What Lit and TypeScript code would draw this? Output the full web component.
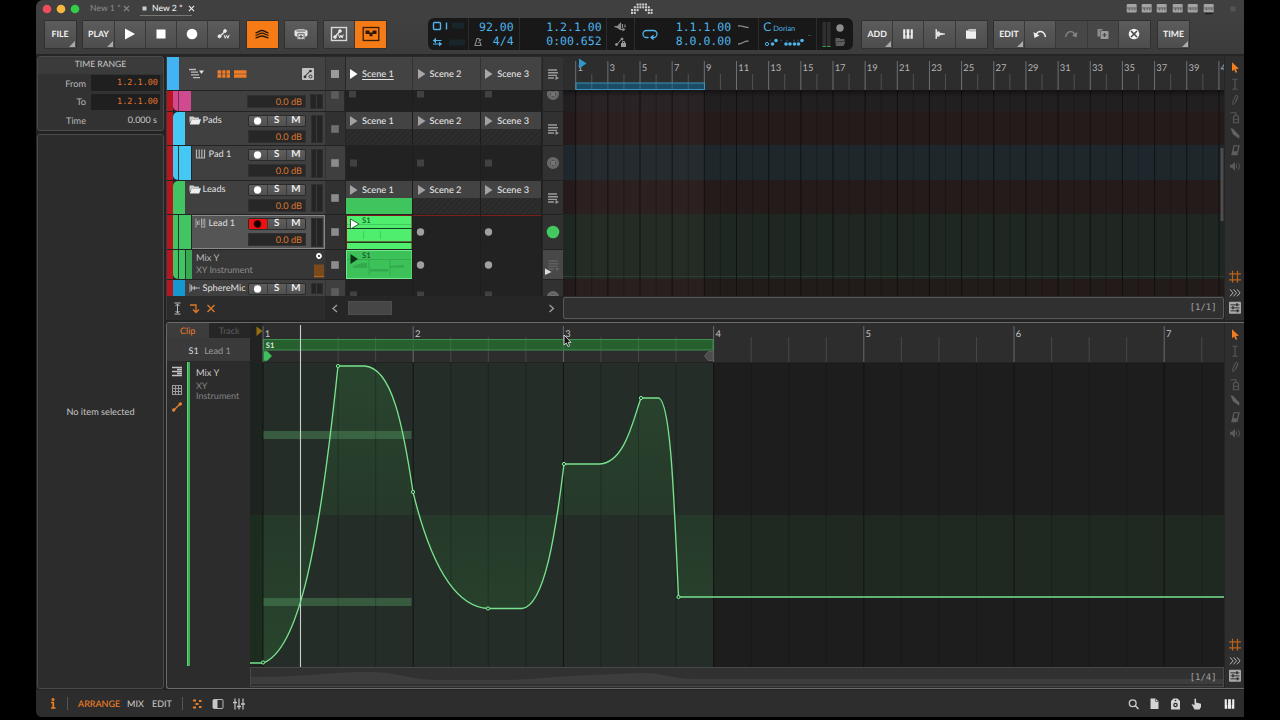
import { LitElement, html, svg, css } from "lit";
import { customElement, state } from "lit/decorators.js";

type Track = {
  name: string; h: number; kind: string; color: string; depth: number;
  icon?: string; cells: string; act: string;
};

const TRACKS: Track[] = [
  { name: "", h: 21, kind: "cut", color: "#cf4a8e", depth: 0, cells: "stop", act: "ring" },
  { name: "Pads", h: 34, kind: "group", color: "#44c8f5", depth: 0, icon: "folder", cells: "scene", act: "list" },
  { name: "Pad 1", h: 35, kind: "track", color: "#44c8f5", depth: 1, icon: "keys", cells: "stop", act: "ring" },
  { name: "Leads", h: 34, kind: "group", color: "#43c463", depth: 0, icon: "folder", cells: "scene", act: "list" },
  { name: "Lead 1", h: 35, kind: "armed", color: "#43c463", depth: 1, icon: "hybrid", cells: "rec", act: "live" },
  { name: "Mix Y", h: 30, kind: "lane", color: "#43c463", depth: 2, cells: "rec", act: "lane" },
  { name: "SphereMic", h: 17, kind: "last", color: "#1697cf", depth: 0, icon: "wave", cells: "stop", act: "ring" },
];

/* Glyphs share a box centred on 0,0 */
const G: Record<string, any> = {
  play: svg`<path d="M-5-5.5L5 0L-5 5.5z" fill="#fff"/>`,
  stop: svg`<rect x="-4.5" y="-4.5" width="9" height="9" fill="#fff"/>`,
  rec: svg`<circle r="5.3" fill="#fff"/>`,
  autoW: svg`<g stroke="#e8e8e8" fill="#e8e8e8"><path d="M-4.5 2.500L1.500-3" stroke-width="1.300"/><circle cx="-4.500" cy="2.300" r="1.500"/><circle cx="1" cy="-3" r="1.400"/><path d="M0 0.800l1.300 3.500l1.300-3l1.300 3l1.300-3.500" fill="none" stroke-width="1"/></g>`,
  layers: svg`<g fill="none" stroke="#2a1704" stroke-width="1.300"><path d="M-6.500-1.200C-3.500-1.200-3-3.500 0-3.500S3.500-1.200 6.500-1.200"/><path d="M-6.500 1.300C-3.500 1.300-3-.8 0-.8S3.500 1.300 6.500 1.300"/><path d="M-6.500 3.800C-3.500 3.800-3 2 0 2S3.500 3.800 6.500 3.800"/></g>`,
  drum: svg`<path d="M-6.500-3C-6.500-5.500 6.500-5.500 6.500-3V1C6.500 2 5 2.500 4 2.800V5.500H-4V2.800C-5 2.500-6.500 2-6.500 1z" fill="#e2e2e2"/><ellipse cy="-3" rx="5" ry="1.200" fill="#9a9a9a"/><rect x="-3.500" y="-.6" width="7" height="6.600" fill="#444"/><rect x="-2.700" y=".2" width="5.400" height="5" fill="#e2e2e2"/><path d="M0 .8v3.800M-1.900 2.700h3.800" stroke="#444"/>`,
  boxAuto: svg`<rect x="-7.500" y="-6.500" width="15" height="13" fill="none" stroke="#d8d8d8" stroke-width="1.400"/><g stroke="#e8e8e8" fill="#e8e8e8"><path d="M-4 3L1-3" stroke-width="1.300"/><circle cx="-4" cy="3" r="1.300"/><circle cx="1" cy="-3" r="1.300"/><path d="M-.5 0.500l1.200 3.500l1.200-3l1.200 3l1.200-3.500" fill="none"/></g>`,
  boxClip: svg`<rect x="-7.800" y="-6.500" width="15.600" height="13" fill="none" stroke="#3a1d05" stroke-width="1.300"/><path d="M-5.500-3.500h4v3.500h-4zM-1.500-1.500h3v3.700h-3zM1.500-3.500h4v3.500h-4z" fill="#2c1603"/>`,
  piano: svg`<path d="M-4.800-4.800H-2.700V1H-1.400V-4.800H1.400V1H2.700V-4.800H4.800V4.800H-4.800z" fill="#eee"/><path d="M-2-1V5M2-1V5" stroke="#4b4b4b" stroke-width=".9"/>`,
  wave: svg`<path d="M-4.500-5L-3.300-5L-2.500-2L-1-3L0-1.300L5-.5V.5L0 1.300L-1 3L-2.500 2L-3.300 5H-4.500z" fill="#e2e2e2"/>`,
  folder: svg`<path d="M-5-3.500H-2.500V-4.800H5V4.800H-5z" fill="#eee"/><path d="M-2-3.200H5" stroke="#777" stroke-width=".7"/>`,
  undo: svg`<path d="M-4 1.500C-2.500-4 4-4 5.500 3" fill="none" stroke="#eee" stroke-width="1.500"/><path d="M-6.500-2L-5.500 4L-.5 1.500z" fill="#eee"/>`,
  redo: svg`<path d="M4 1.500C2.500-4-4-4-5.500 3" fill="none" stroke="#858585" stroke-width="1.300"/><path d="M6.300-2L5.500 3.500L1 1.500z" fill="#858585"/>`,
  dup: svg`<path d="M-5.500-5h5v1.500h-2.500v6h-2.500z" fill="#8b8b8b"/><rect x="-2.500" y="-3" width="8" height="8" rx="1" fill="#9a9a9a"/><path d="M1.500-1v4M-.5 1h4" stroke="#444" stroke-width="1.200"/>`,
  del: svg`<circle r="5.300" fill="#f2f2f2"/><path d="M-3-3L3 3M3-3L-3 3" stroke="#444" stroke-width="1.500"/>`,
};

const keysGlyph = svg`<path d="M-4-4.500v9M-1.300-4.500v9M1.300-4.500v9M4-4.500v9M-4.500 4h9" stroke="#b5b5b5" stroke-width="1.200" fill="none"/>`;

const TOOLS = [
  svg`<path d="M-3-5L4 1.500L.8 1.700L2.300 5L.6 5.500L-.8 2.300L-3 4z" fill="#ef7d22"/>`,
  svg`<path d="M-2.500-5h2l.5.500.5-.5h2M-2.500 5h2l.5-.5.5.5h2M0-5V5" stroke="#5c5c5c" fill="none"/>`,
  svg`<path d="M-2 4.500L-2.200 1.500L1-5L3-4L0 2.500z" fill="none" stroke="#575757"/><path d="M.5 2L3-3" stroke="#575757"/>`,
  svg`<path d="M-1.500 5.500V-.5L0-2H2L3.500-.5V5.500z" fill="none" stroke="#575757" stroke-width="1.200"/><path d="M1-5v3M-4.500-4.500H1M-1 2h4" stroke="#575757"/>`,
  svg`<path d="M-4.500-5L-2-4.500L4.500 2.500L4 5.500L-2 1z" fill="#626262"/>`,
  svg`<path d="M-3 4.500L-1 -4.500H4L2 4.500z" fill="none" stroke="#606060" stroke-width="1.200"/><path d="M-2 1h4l-.7 3.500h-4z" fill="#606060"/>`,
  svg`<path d="M-5-1.500h2L0-4.500V4.500L-3 1.500h-2z" fill="#5a5a5a"/><path d="M1.500-2v4M3-3.500C5-1.500 5 1.500 3 3.500" stroke="#5a5a5a" fill="none"/>`,
];
const TOOLS2 = [
  svg`<path d="M-2.500-6V6M2.500-6V6M-6-3H6M-6 3H6" stroke="#b8621f" stroke-width="1.200"/>`,
  svg`<path d="M-5-3.500L-2 0L-5 3.500M-1.500-3.500L1.500 0L-1.500 3.500M2-3.500L5 0L2 3.500" stroke="#b5b5b5" fill="none"/>`,
  svg`<rect x="-6" y="-6" width="12" height="12" rx="1" fill="#a9a9a9"/><path d="M-4.500-3h9M-4.500 0h9M-4.500 3h9" stroke="#333"/><path d="M2-4.500v3M-2-1.500v3M2.500 1.500v3" stroke="#333" stroke-width="1.600"/>`,
];

const ic = (g: any, w = 16, h = 16) =>
  html`<svg width=${w} height=${h} viewBox="${-w / 2} ${-h / 2} ${w} ${h}">${g}</svg>`;
const range = (n: number) => Array.from({ length: n }, (_, i) => i);
const stripWidth = (t: Track) => (t.kind === "cut" ? 24.3 : t.depth === 0 ? 18 : t.depth === 1 ? 24.5 : 25);
const closeX = () => ic(svg`<path d="M-2.600-2.600L2.600 2.600M2.600-2.600L-2.600 2.600" stroke="currentColor" stroke-width="1.100"/>`, 7, 7);

@customElement("app-root")
export class AppRoot extends LitElement {
  @state() scenes = ["Scene 1", "Scene 2", "Scene 3"];

  static styles = css`
    :host { display: block; width: 1280px; height: 720px; background: #000; overflow: hidden;
      font-family: Lato, "Open Sans", sans-serif; font-size: 9px; color: #ccc; line-height: 1;
      text-rendering: geometricPrecision; }
    * { box-sizing: border-box; }
    svg { display: block; flex: none; }
    .mono { font-family: "DejaVu Sans Mono", "Liberation Mono", monospace; }
    .win { width: 1208px; height: 717px; margin: 0 36px; background: #232323; border-radius: 7px 0 0 6px;
      display: flex; flex-direction: column; overflow: hidden; position: relative; }
    .title { height: 17px; background: #404040; display: flex; align-items: center; flex: none; }
    .tab { font-size: 8.600px; white-space: nowrap; color: #8b8b8b; display: flex; align-items: center; height: 14px; }
    .tab.on { color: #f0f0f0; border-bottom: 1px solid #777; font-weight: 500; }
    .bar { height: 39px; background: linear-gradient(#404040, #3c3c3c); display: flex; flex: none;
      border-bottom: 2px solid #252525; padding: 3.500px 0 0 8.500px; }
    .bg { display: flex; flex: none; height: 27.500px; box-shadow: 0 0 0 1px #303030; border-radius: 1px; }
    .b { width: 31.200px; height: 27.500px; display: flex; align-items: center; justify-content: center;
      background: linear-gradient(#5c5c5c, #4d4d4d); border-right: 1px solid #393939; position: relative;
      color: #f2f2f2; font-size: 8.700px; font-weight: 700; }
    .b:last-child { border-right: 0; }
    .b.o { background: #f47b16; }
    .b.off { background: #474747; }
    .b.m::after { content: ""; position: absolute; right: 1px; bottom: 1px; border: 3px solid;
      border-color: transparent #aaa #aaa transparent; }
    .lcd { width: 425px; height: 32px; margin-top: -2.500px; background: #181818; border-radius: 6px; display: grid; flex: none;
      grid-template-columns: 41px 51px 87px 28px 124px 58px 36px; color: #4fb3e8; overflow: hidden; }
    .lcd > div { border-right: 1px solid #2c2c2c; display: flex; }
    .lcd > div:last-child { border: 0; }
    .two { flex-direction: column; justify-content: space-between; align-items: flex-end; padding: 3px 5px 2px 0; }
    .two span { font-size: 11.500px; line-height: 13px; height: 13px; }
    .two .r { display: flex; align-items: center; }
    .body { display: grid; grid-template-columns: 129px 1079px; height: 634px; flex: none; }
    .left { padding: 0 1px 1px 1px; display: flex; flex-direction: column; gap: 3px; }
    .panel { border: 1px solid #4a4a4a; border-radius: 3px; background: #2c2c2c; }
    .tr { height: 75px; background: #323232; overflow: hidden; }
    .tr h1 { margin: 0; height: 17px; font-size: 8.600px; font-weight: 400; text-align: center; color: #c6c6c6;
      line-height: 14.500px; background: #3b3b3b; }
    .tr .f { display: flex; align-items: center; height: 18.600px; }
    .tr .f label { width: 48px; text-align: right; color: #b8b8b8; font-size: 9.200px; }
    .tr .f b { margin-left: 5px; width: 69px; height: 16px; line-height: 16.500px; background: #1f1f1f; text-align: right;
      font-weight: 400; padding-right: 2px; color: #e0762c; font-size: 8.500px; }
    .tr .f b.n { background: none; color: #c6c6c6; font-size: 9px; padding-right: 3px; }
    .empty { flex: 1; display: flex; align-items: center; justify-content: center; color: #c4c4c4; font-size: 9.200px; }
    .main { display: flex; flex-direction: column; gap: 2px; padding-left: 1px; }
    .arr { height: 264px; display: grid; grid-template-columns: 396px 661px 20px; background: #2a2a2a;
      border-left: 1px solid #3c3c3c; }
    .hd { height: 34px; display: flex; background: #434343; border-top: 1px solid #2a2a2a; }
    .hd .blue { width: 11.500px; background: #42b4f4; }
    .hd .ctl { width: 146.500px; display: flex; align-items: center; }
    .st { width: 20.500px; display: flex; align-items: center; justify-content: center; background: #3d3d3d;
      border-right: 1px solid #262626; border-left: 1px solid #333; flex: none; }
    .sc { display: grid; grid-template-columns: 67.600px 67.600px 61.800px; flex: none; }
    .s { display: flex; align-items: center; gap: 4px; color: #e2e2e2; font-size: 9.200px; font-weight: 500; border-right: 1px solid #333;
      background: #434343; padding-left: 3.500px; white-space: nowrap; overflow: hidden; }
    .s u { text-underline-offset: 2px; }
    .row { display: flex; border-top: 1px solid #232323; background: #3b3b3b; overflow: hidden; }
    .strips { display: flex; background: #262626; flex: none; height: 100%; }
    .strips i { height: 100%; display: block; flex: none; }
    .inf { display: flex; background: #3f3f3f; overflow: hidden; flex: none; }
    .nm { flex: 1; display: flex; gap: 4px; color: #dadada; font-size: 9.200px; font-weight: 500; height: 16px; align-items: center; white-space: nowrap; }
    .mix { width: 58.500px; flex: none; }
    .rsm { display: flex; height: 12px; margin-top: 3px; background: linear-gradient(#5f5f5f, #505050); border: 1px solid #2a2a2a; border-radius: 2px; }
    .rsm span { flex: 1; display: flex; align-items: center; justify-content: center; font-weight: 700; color: #eee;
      border-right: 1px solid #3a3a3a; font-size: 9.800px; }
    .rsm span:last-child { border: 0; }
    .rsm .arm { background: #ee1111; }
    .db { height: 13px; margin-top: 2.500px; background: #272727; color: #dd752d; text-align: right;
      padding-right: 3px; font-size: 9.200px; border: 1px solid #303030; line-height: 11.500px; }
    .mt { width: 12.500px; margin: 3px 2px 2px 4.500px; background: #242424; border: 1px solid #2f2f2f; display: flex; justify-content: center; flex: none; }
    .mt::before { content: ""; width: 1px; background: #3a3a3a; }
    .cell { border-right: 1px solid #1d1d1d; background: #222; overflow: hidden; }
    .cell .s { height: 17px; border: 0; }
    .hatch { background: repeating-linear-gradient(135deg, #2d2d2d 0 2px, #292929 2px 4px); }
    .ac { flex: 1; display: flex; align-items: center; justify-content: center; background: #333; border-left: 1px solid #242424; }
    .ft { height: 24px; display: flex; align-items: center; background: #262626; }
    .ft .l { width: 158px; display: flex; align-items: center; background: #2c2c2c; height: 24px; padding-left: 2.500px; }
    .thumb { width: 44px; height: 14px; background: #464646; border: 1px solid #4e4e4e; margin-left: 5px; }
    .tl { display: flex; flex-direction: column; }
    .sb { height: 22px; margin-top: 1px; background: #303030; border: 1px solid #585858; border-radius: 2px; text-align: right;
      color: #a0a0a0; line-height: 21px; font-size: 8.900px; padding-right: 6.500px; }
    .tools { display: flex; flex-direction: column; background: #2e2e2e; border-left: 1px solid #242424; align-items: center; }
    .tools .sp { flex: 1; }
    .ed { height: 367px; display: grid; grid-template-columns: 83px 974px 20px; background: #2c2c2c; border: 1px solid #6b6b6b;
      border-right: 0; border-radius: 3px 0 0 3px; }
    .tabs { display: flex; height: 15px; font-size: 9px; line-height: 15px; text-align: center; }
    .tabs div { width: 41.500px; background: #3c3c3c; color: #ec7b29; }
    .tabs .off { background: #262626; color: #5c5c5c; }
    .clipn { height: 24px; background: #3a3a3a; border-bottom: 1px solid #2a2a2a; line-height: 25px; padding-left: 21.500px;
      color: #dcdcdc; font-size: 9.200px; }
    .clipn em { font-style: normal; color: #999; margin-left: 3px; }
    .lane { display: flex; height: 304px; }
    .lane .v { width: 20px; display: flex; flex-direction: column; align-items: center; padding-top: 1px; gap: 1.500px; }
    .lane .g { width: 3px; background: #3fae57; border-left: 1px solid #56d673; }
    .lane .t { padding: 6px 0 0 6px; color: #cfcfcf; line-height: 10.500px; font-size: 9.300px; width: 58px; }
    .lane .t p { margin: 2px 0 0; color: #858585; line-height: 10.500px; font-size: 9px; }
    .scr { height: 20px; background: #313131; border: 1px solid #484848; position: relative; display: flex; justify-content: flex-end; }
    .scr span { position: relative; color: #a0a0a0; line-height: 20px; font-size: 8.900px; padding-right: 6.500px; }
    .scr svg { position: absolute; left: 0; top: 0; }
    .foot { height: 27px; display: flex; align-items: center; background: #2d2d2d; font-size: 9px; font-weight: 500; color: #c4c4c4; }
    .foot i { width: 1px; height: 13px; background: #555; }
    .cursor { position: absolute; left: 527px; top: 334px; }
  `;

  btn(label: string, cls = "") {
    return html`<div class="b ${cls}">${G[label] ? ic(G[label], 20, 20) : label}</div>`;
  }
  group(items: [string, string?][], gap: number) {
    return html`<div class="bg" style="margin-right:${gap}px">${items.map(([l, c]) => this.btn(l, c ?? ""))}</div>`;
  }

  trackIcon(k?: string) {
    if (k === "folder") return ic(svg`<path d="M-5.500-3.500H-1.500L-.5-2.500H4V-1H-3L-5.500 3z" fill="#ccc"/><path d="M-3.200-.8H6L4.200 4.500H-5.200z" fill="#eee"/>`, 12, 12);
    if (k === "keys") return ic(keysGlyph, 11, 12);
    if (k === "hybrid") return ic(svg`<path d="M-4.500-4.500v9M-3-2v4M-1.500-3v5M1-4.500v9M4.300-4.500v9M1 4h3.300M2.600-4v6" stroke="#aaa" fill="none"/>`, 11, 12);
    return ic(svg`<path d="M-4.500-4v8M-3-3v6M-1.500-1.500v3M0-2v4M1.500-1v2M-4.500 0h10" stroke="#aaa" fill="none"/>`, 11, 12);
  }

  strips(t: Track) {
    const c = t.color, bar = (w: number, col: string, r = "") =>
      html`<i style="width:${w}px;background:${col};border-radius:${r || "0"}"></i>`;
    const red = bar(5.5, "#b5161f"), gap = bar(0.8, "#262626"), line = bar(1, "#1f3a2c");
    if (t.kind === "cut") return html`${red}${gap}${bar(5, c, "0 0 0 5px")}${bar(1, "#7a2850")}${bar(12, c)}`;
    if (t.kind === "last") return html`${red}${gap}${bar(11.7, c)}`;
    if (t.depth === 0) return html`${red}${gap}${bar(11.7, c, "5px 0 0 0")}`;
    if (t.depth === 1) return html`${red}${gap}${bar(5.2, c, t.name === "Pad 1" ? "0 0 0 5px" : "")}${line}${bar(12, c)}`;
    return html`${red}${gap}${bar(5.2, c, "0 0 0 5px")}${line}${bar(5.5, c)}${line}${bar(6, "#38a854")}`;
  }

  info(t: Track) {
    if (t.kind === "lane") return html`<div style="width:121px;padding:2px 0 0 4px;color:#bcbcbc;font-size:9.3px;line-height:12px">
        <div>Mix Y</div><div style="color:#8e8e8e;font-size:9px">XY Instrument</div></div>
      ${ic(svg`<circle cx="0" cy="-8.500" r="2" fill="#222" stroke="#fff" stroke-width="1.800"/><rect x="-5" y="0" width="10" height="13" fill="#7a4a1c"/><path d="M-5 12h10" stroke="#b0661f"/>`, 12, 29)}`;
    const rec = t.kind === "armed"
      ? html`<span class="arm">${ic(svg`<circle r="3.900" fill="#6a0000"/><circle r="3" fill="#120000"/>`, 9, 10)}</span>`
      : html`<span>${ic(svg`<circle r="3.700" fill="#fff"/>`, 9, 10)}</span>`;
    return html`
      <div class="nm" style="padding-left:${t.depth ? 3 : 4}px;gap:${t.kind === "group" ? 1.5 : t.kind === "last" ? 2.5 : 3}px">
        ${t.name ? this.trackIcon(t.icon) : ""}${t.name}</div>
      <div class="mix">
        ${t.kind === "cut" ? html`<div style="height:1px"></div>` : html`<div class="rsm">${rec}<span>S</span><span>M</span></div>`}
        ${t.kind === "last" ? "" : html`<div class="db">0.0 dB</div>`}
      </div><div class="mt"></div>`;
  }

  tri(fill: string) {
    return ic(svg`<path d="M-3.500-5L4 0L-3.500 5z" fill=${fill}/>`, 9, 12);
  }

  clip(t: Track) {
    if (t.name === "Leads") return svg`<rect x="0" y="17" width="66.500" height="17" fill="#40c45d"/>`;
    if (t.name === "Lead 1") return svg`<rect width="66.500" height="34" fill="#7a1a18"/><rect x="1" y="1" width="64.500" height="12" fill="#50ee6e"/><rect x="1" y="14" width="64.500" height="12.500" fill="#50ee6e"/><rect x="1" y="28" width="64.500" height="6" fill="#50ee6e"/>
      <path d="M1 13.500h64.500M1 27.300h64.500" stroke="#123c1b"/><path d="M1 9.500h64.500M17.500 16v8M34.500 16v8" stroke="#37b352" stroke-width=".6"/>
      <path d="M4.500 4L13 9L4.500 14z" fill="#fff" stroke="#1d3d22" stroke-width=".8"/><text x="16" y="7.500" font-size="7.800" fill="#123c1b">S1</text>`;
    return svg`<rect x=".5" y=".5" width="65.500" height="28" fill="#3dc159" stroke="#72e88a"/><path d="M1 9.500h64M23 10v15M44 10v15" stroke="#2f9c47" stroke-width=".6"/>
      <path d="M7 16L16 13H21V18H7zM24 19h18v2.500h-18zM44 16l14-1v2.500H44z" fill="#35a94e"/><path d="M4.500 4L12 9L4.500 14z" fill="#0e3418"/><text x="16" y="7.500" font-size="7.800" fill="#123c1b">S1</text>`;
  }

  cell(t: Track, i: number) {
    const hasClip = i === 0 && ["Leads", "Lead 1", "Mix Y"].includes(t.name);
    if (t.cells === "scene") return html`<div class="cell hatch"><div class="s">${this.tri("#a2a2a2")}${this.scenes[i]}</div>
      ${hasClip ? html`<svg width="67" height="17" viewBox="0 17 67 17">${this.clip(t)}</svg>` : ""}</div>`;
    const y = t.h / 2 - (t.kind === "cut" ? 7 : 0) + (t.kind === "last" ? 7 : 0) - (t.kind === "lane" ? 0 : .5);
    return html`<div class="cell"><svg width="67" height=${t.h} viewBox="0 0 67 ${t.h}">
      ${t.name === "Lead 1" ? svg`<path d="M0 .5h67" stroke="#7d1e1c" stroke-width="1.200"/>` : ""}
      ${hasClip ? this.clip(t) : t.cells === "rec"
        ? svg`<circle cx="7.500" cy=${y} r="3.700" fill="#a0a0a0"/>`
        : svg`<rect x="4" y=${y - 3.5} width="7" height="7" fill="#414141"/>`}
    </svg></div>`;
  }

  action(t: Track) {
    const lines = svg`<path d="M-5-4H4M-5-1.300H5M-5 1.400H4M-5 4H1" stroke="#9a9a9a" stroke-width="1.400"/><path d="M2.500 2L6 4L2.500 6z" fill="#9a9a9a"/>`;
    if (t.act === "list") return ic(lines);
    if (t.act === "live") return ic(svg`<circle r="6.300" fill="#43c95f"/>`);
    if (t.act === "lane") return ic(svg`<g opacity=".3">${lines}</g><path d="M-8.500 3.500L-2 7L-8.500 10z" fill="#ddd"/>`, 19, 28);
    return ic(svg`<circle r="4.300" fill="none" stroke="#686868" stroke-width="3.600"/><rect x="-2" y="-2" width="4" height="4" fill="#747474"/>`, 16, 14);
  }

  timeline() {
    const x0 = 575.7, bar = 16.08;
    const bands: [number, number, string][] = [[90, 111, "#221f21"], [111, 145, "#261b1b"], [145, 180, "#1e272b"], [180, 214, "#261b1b"],
      [214, 279, "#1e2721"], [279, 296, "#231a1a"]];
    return html`<svg width="661" height="240" viewBox="563 56 661 240">
      <rect x="563" y="56" width="661" height="34" fill="#2d2d2d"/>
      ${bands.map(([a, b, c]) => svg`<rect x="563" y=${a} width="661" height=${b - a} fill=${c}/>`)}
      <rect x="575.700" y="90" width="129" height="206" fill="#ffb0b0" opacity=".035"/>
      <path d="M563 276.500H1224" stroke="#2b3d2d"/>
      ${range(41).map((i) => {
        const x = x0 + i * bar, odd = i % 2 === 0;
        return svg`<path d="M${x} 90V296" stroke="#0e0e0e" stroke-opacity=${odd ? .85 : .35}/>
          <path d="M${x} ${odd ? 61 : 74}V90" stroke=${odd ? "#777" : "#565656"} stroke-width=".9"/>
          ${odd ? svg`<text x=${x + 1.7} y="71.300" font-size="9.400" fill="#b4b4b4">${i + 1}</text>` : ""}`;
      })}
      <defs><linearGradient id="sh" x2="0" y2="1"><stop stop-color="#000" stop-opacity=".4"/><stop offset="1" stop-color="#000" stop-opacity="0"/></linearGradient></defs>
      <rect x="563" y="90" width="661" height="7" fill="url(#sh)"/>
      <rect x="576" y="83" width="128.500" height="6.500" fill="#1c4b64" stroke="#3893bf"/>
      ${range(7).map((i) => svg`<path d="M${x0 + (i + 1) * bar} 83V89" stroke="#49798f" stroke-width=".7"/>`)}
      <path d="M579 58.500L586.500 63.500L579 68.500z" fill="#3098cb"/>
      <rect x="1220.500" y="148" width="3" height="73" fill="#4d4d4d"/>
    </svg>`;
  }

  editor() {
    const x0 = 263, beat = 150.2;
    const curve = "M250 663H263C300 650 320 540 338 366H365C392 368 403 425 413 492C432 570 458 607 488 608.500H522C545 606 556 530 564 464H600C625 462 633 420 641 398H659C671 404 674 500 678.500 597H1224";
    return html`<svg width="974" height="344" viewBox="250 323 974 344">
      <defs>
        <linearGradient id="gv" gradientUnits="userSpaceOnUse" x1="0" y1="366" x2="0" y2="663">
          <stop stop-color="#29452e"/><stop offset=".5" stop-color="#26392a"/><stop offset="1" stop-color="#28452d"/></linearGradient>
        <clipPath id="cl"><rect x="250" y="363" width="463.500" height="304"/></clipPath>
      </defs>
      <rect x="250" y="323" width="974" height="40" fill="#2d2d2d"/>
      <rect x="250" y="323" width="13" height="40" fill="#222"/>
      <rect x="250" y="363" width="974" height="304" fill="#1d1d1d"/>
      <rect x="263" y="363" width="450.500" height="304" fill="#242d27"/>
      <rect x="250" y="363" width="13" height="304" fill="#1d231e"/>
      <path d="${curve}V515H250z" fill="url(#gv)" clip-path="url(#cl)"/>
      <rect x="250" y="515" width="13" height="148" fill="#1c2c1f"/>
      <rect x="713.500" y="515" width="511" height="82" fill="#1f2922"/>
      <rect x="263" y="431" width="148.500" height="8" fill="#4b8a5a" opacity=".5"/>
      <rect x="263" y="598" width="148.500" height="8" fill="#4b8a5a" opacity=".5"/>
      ${range(26).map((i) => {
        const x = x0 + (i * beat) / 4, major = i % 4 === 0;
        return svg`<path d="M${x} 363V667" stroke="#0c0f0c" stroke-opacity=${major ? .8 : .28}/>
          <path d="M${x} ${major ? 326 : 337}V362" stroke=${major ? "#6a6a6a" : "#484848"}/>
          ${major ? svg`<text x=${x + 1.8} y="336.500" font-size="9.400" fill="#c4c4c4">${i / 4 + 1}</text>` : ""}`;
      })}
      <path d="M250 362.500H1224" stroke="#222"/>
      <rect x="263.500" y="339.500" width="449.500" height="10.500" fill="#27602f" stroke="#3f8f52"/>
      ${range(11).map((i) => svg`<path d="M${x0 + ((i + 1) * beat) / 4} 340V350" stroke="#3c7a48" stroke-width=".7"/>`)}
      <text x="265.800" y="347.600" font-size="7.600" font-weight="700" fill="#d8efdc">S1</text>
      <path d="M256.500 326.500L262.500 331L256.500 336z" fill="#96700f"/>
      <path d="M263.500 351H267L272 356L267 361H263.500z" fill="#3fc05d" stroke="#2a7a3b" stroke-width=".8"/>
      <path d="M713 351.500H708L704.500 356L708 360.500H713z" fill="#4c4c4c" stroke="#5a5a5a"/>
      <path d="M300.500 325V667" stroke="#c9d2ca" stroke-width="1.100"/>
      <path d=${curve} fill="none" stroke="#78e28e" stroke-width="1.350"/>
      ${[[263, 662.5], [338, 366], [413, 492], [488, 608.5], [564, 464], [641, 398], [678.5, 597]].map(([x, y]) =>
        svg`<circle cx=${x} cy=${y} r="1.600" fill="#1d3a24" stroke="#86f09c" stroke-width="1"/>`)}
    </svg>`;
  }

  tools() {
    return html`<div class="tools"><div style="height:3px"></div>${TOOLS.map((g) => ic(g, 16, 16.5))}<div class="sp"></div>
      ${TOOLS2.map((g) => ic(g, 16, 15.7))}<div style="height:4px"></div></div>`;
  }

  render() {
    const B = "#4fb3e8";
    return html`<div class="win">
      <div class="title">
        ${ic(svg`<circle cx="-14" r="4.300" fill="#ee4d5c"/><circle r="4.300" fill="#f5b83d"/><circle cx="14" r="4.300" fill="#32cc47"/>`, 50, 14)}
        <div class="tab" style="width:44px;padding-left:4px"><span style="flex:1">New 1 *</span>${closeX()}</div>
        <div class="tab on" style="width:52px;margin-left:10px;padding:0 1px 0 2px;gap:5px">
          ${ic(svg`<rect x="-2" y="-2" width="4" height="4" fill="#ccc"/>`, 5, 5)}<span style="flex:1">New 2 *</span>${closeX()}</div>
        <svg width="24" height="12" viewBox="0 0 24 12" style="margin-left:438px">${range(4).map((r) => range(8).map((c) =>
          [[0, 0, 1, 1, 1, 1, 0, 0], [0, 1, 1, 1, 1, 1, 1, 0], [1, 1, 1, 0, 0, 1, 1, 1], [1, 1, 0, 0, 0, 0, 1, 1]][r][c]
            ? svg`<rect x=${1 + c * 2.8} y=${.5 + r * 2.8} width="2" height="2" fill="#d2d2d2"/>` : ""))}</svg>
        <div style="flex:1"></div>
        ${range(6).map((i) => ic(svg`<rect x="-5" y="-4.500" width="10" height="8.500" rx="1" fill="#a3a3a3"/><path d="M-5-.5H5" stroke="#5a5a5a"/><path d="M-3 1h1.500M0 1h1M2.500 1h1.200" stroke="#555" stroke-width="1.500"/>${i === 5 ? svg`<path d="M-4 5h8" stroke="#222" stroke-width="1.800"/>` : ""}`, 15.4, 15))}
        <div style="width:13px"></div>${ic(svg`<rect x="-2.500" y="-2.500" width="5" height="5" fill="#555"/>`, 8, 8)}<div style="width:7px"></div>
      </div>
      <div class="bar">
        ${this.group([["FILE", "m"]], 7.7)}
        ${this.group([["PLAY", "m"], ["play"], ["stop"], ["rec"], ["autoW"]], 7.3)}
        ${this.group([["layers", "o"]], 7.6)}
        ${this.group([["drum"]], 7.4)}
        ${this.group([["boxAuto"], ["boxClip", "o"]], 41.3)}
        <div class="lcd">
          <div>${ic(svg`<rect x="-14.500" y="-11.500" width="7" height="7" rx="1" fill="none" stroke=${B} stroke-width="1.400"/><path d="M-1.500-11.500v7" stroke=${B} stroke-width="1.400"/><path d="M-15 6.500H-6.500M-15 10H-6.500" stroke=${B} stroke-width="1.200"/><path d="M-15 6.500l3-3v6zM-6 10l-3-2.500v5z" fill=${B}/><path d="M4-8.500h12M1 8.500h16" stroke="#18262c" stroke-width="6"/>`, 40, 32)}</div>
          <div class="two mono"><span>92.00</span><span class="r">${ic(svg`<path d="M-3 3.500L-1-3.500H1L3 3.500zM0 1L3.500-3" fill="none" stroke="#888" stroke-width="1.100"/>`, 10, 10)}<span style="margin-left:10px">4/4</span></span></div>
          <div class="two mono" style="padding-right:4px"><span>1.2.1.00</span><span>0:00.652</span></div>
          <div>${ic(svg`<path d="M-6-7.500h3l3-3v6l-3-2zM2-10v4M4.500-9.500v3M-1-4.500h4" stroke="#8a8a8a" fill="#8a8a8a" stroke-width="1.200"/><path d="M2-6.500v4l3-2z" fill="#8a8a8a"/><g stroke="#999" fill="#999"><path d="M-4 11L1 5"/><circle cx="-4" cy="10.500" r="1"/><circle cx="1.500" cy="5" r="1"/><rect x="1" y="9.500" width="4" height="3"/><path d="M2 9V7.500h2V9" fill="none"/></g>`, 27, 32)}</div>
          <div>${ic(svg`<path d="M-1.500 3.500H-3.500A3.500 3.500 0 0 1-3.500-3.500H3.500A3.500 3.500 0 0 1 3.500 3.500H1.500M3.500 1.300L1 3.500L3.500 5.500" fill="none" stroke=${B} stroke-width="1.300"/>`, 30, 32)}
            <div class="two mono" style="display:flex;width:67.500px;padding-right:1px"><span>1.1.1.00</span><span>8.0.0.00</span></div>
            ${ic(svg`<path d="M-5-8C0-9-1-6.500 5.500-6.500M-5 10C1 10-1 7 5.500 7" stroke="#888" fill="none" stroke-width="1.300"/>`, 22, 32)}</div>
          <div style="flex-direction:column;padding:3px 0 0 4.500px"><div style="display:flex;align-items:baseline;height:14px;font-size:12px">C<span style="font-size:7.400px;margin-left:2px">Dorian</span></div>
            ${ic(svg`<circle cx="-21" cy="1.500" r="1.600" fill="none" stroke=${B}/>${[[-15.5, 1.5], [-12, -2], [-2, 1.5], [2, 1.5], [6.500, 1.5], [10.5, 1.5], [14, -2]].map(([x, y]) => svg`<circle cx=${x} cy=${y} r="1.800" fill=${B}/>`)}${[-18, -7, -1, 6, 10].map((x) => svg`<circle cx=${x} cy="-2" r="1" fill="#264353"/>`)}<path d="M20-7.500h3" stroke="#3f8f3f"/>`, 50, 15)}</div>
          <div>${ic(svg`<rect x="-12" y="-12" width="3.500" height="25" fill="#2f2f2f"/><rect x="-7.500" y="-12" width="3.500" height="25" fill="#2f2f2f"/><path d="M-12 12.500h3.500M-7.500 12.500h3.500" stroke="#2f9e45" stroke-width="1.200"/><circle cx="5.500" cy="-6" r="3.700" fill="#8d8d8d"/><path d="M1 4h4l1 1h4v2H3L1 11zM3 7.500h8L9 12H1z" fill="#5c5c5c"/>`, 35, 32)}</div>
        </div>
        <div style="width:9.400px"></div>
        ${this.group([["ADD", "m"], ["piano"], ["wave"], ["folder"]], 7.2)}
        ${this.group([["EDIT", "m"], ["undo"], ["redo", "off"], ["dup", "off"], ["del"]], 8)}
        ${this.group([["TIME", "m"]], 0)}
      </div>
      <div class="body">
        <div class="left">
          <div class="panel tr"><h1>TIME RANGE</h1>
            <div class="f"><label>From</label><b class="mono">1.2.1.00</b></div>
            <div class="f"><label>To</label><b class="mono">1.2.1.00</b></div>
            <div class="f"><label>Time</label><b class="n">0.000 s</b></div>
          </div>
          <div class="panel empty">No item selected</div>
        </div>
        <div class="main">
          <div class="arr">
            <div>
              <div class="hd"><div class="blue"></div>
                <div class="ctl">
                  <div style="width:8px"></div>
                  ${ic(svg`<path d="M-7-4.500H0M-5-1.800H2M-5 .9H3M-3 3.600H4" stroke="#bbb" stroke-width="1.300"/><path d="M3-3.500h5L5.500 0z" fill="#ddd"/>`, 18, 14)}
                  <div style="width:12px"></div>
                  ${ic(svg`<path d="M-14.500-2H-2M-14.500 2H-2M2-2H14.500M2 2H14.500" stroke="#ee7d28" stroke-width="3.300"/><path d="M-10.200-4v8M-6-4v8" stroke="#434343"/>`, 30, 14)}
                  <div style="width:54px"></div>
                  ${ic(svg`<rect x="-6" y="-6" width="12" height="12" rx="1" fill="#c2c2c2"/><path d="M-4 3.500L2.500-3.500" stroke="#333" stroke-width="1.100"/><circle cx="-3" cy="2.800" r="1.400" fill="#333"/><circle cx="2.500" cy="-3" r="1.300" fill="#333"/><circle cx="2.500" cy="2.500" r="1.500" fill="none" stroke="#333"/>`, 14, 14)}
                </div>
                <div class="st">${ic(svg`<rect x="-4" y="-4" width="8" height="8" fill="#9a9a9a"/>`, 8, 8)}</div>
                <div class="sc">${this.scenes.map((s, i) => html`<div class="s">${this.tri(i ? "#a8a8a8" : "#fff")}${i ? s : html`<u>${s}</u>`}</div>`)}</div>
                <div class="ac">${this.action({ act: "list" } as Track)}</div>
              </div>
              ${TRACKS.map((t) => html`<div class="row" style="height:${t.h}px">
                <div class="strips" style="width:${stripWidth(t)}px">${this.strips(t)}</div>
                <div class="inf" style="width:${158 - stripWidth(t)}px;background:${t.kind === "armed" ? "#555" : t.kind === "lane" ? "#373737" : "#404040"};box-shadow:${t.kind === "armed" ? "inset -1px 1px 0 #8a8a8a, inset 0 -1px 0 #8a8a8a" : "none"}">${this.info(t)}</div>
                <div class="st" style="background:${t.kind === "armed" || t.kind === "lane" || t.kind === "group" ? "#313131" : "#3f3f3f"};align-items:${t.kind === "cut" ? "flex-start" : t.kind === "last" ? "flex-end" : "center"}">${ic(svg`<rect x="-3.800" y="-3.800" width="7.600" height="7.600" fill=${t.kind === "cut" || t.kind === "last" ? "#5c5c5c" : t.depth || t.name === "Leads" ? "#8c8c8c" : "#707070"}/>`, 8, 8)}</div>
                <div class="sc">${range(3).map((i) => this.cell(t, i))}</div>
                <div class="ac" style="align-items:${t.kind === "cut" || t.kind === "last" ? "flex-start" : "center"};background:${t.act === "lane" ? "#484848" : "#313131"}"><div style="margin-top:${t.kind === "cut" ? -4 : t.kind === "last" ? 10 : 0}px">${this.action(t)}</div></div>
              </div>`)}
              <div class="ft">
                <div class="l">${ic(svg`<path d="M-3-5.500H3M-3 5.500H3M0-4.500V4.500M-2-2.500L0-4.500L2-2.500M-2 2.500L0 4.500L2 2.500" stroke="#bbb" fill="none"/>`, 15, 15)}
                  ${ic(svg`<path d="M-4-3.500H2V4M-1 1L2 4L5 1" stroke="#e07a2a" fill="none" stroke-width="1.300"/>`, 18, 15)}
                  ${ic(svg`<path d="M-3.500-3.500L3.500 3.500M3.500-3.500L-3.500 3.500" stroke="#e07a2a" stroke-width="1.300"/>`, 16, 15)}</div>
                ${ic(svg`<path d="M2-3.500L-2 0L2 3.500" stroke="#a0a0a0" fill="none" stroke-width="1.300"/>`, 20, 15)}
                <div class="thumb" style="margin-left:3px"></div><div style="flex:1"></div>
                ${ic(svg`<path d="M-2-3.500L2 0L-2 3.500" stroke="#a0a0a0" fill="none" stroke-width="1.300"/>`, 23, 15)}
              </div>
            </div>
            <div class="tl">${this.timeline()}<div class="sb mono">[1/1]</div></div>
            ${this.tools()}
          </div>
          <div class="ed">
            <div>
              <div class="tabs"><div>Clip</div><div class="off">Track</div></div>
              <div class="clipn">S1 <em>Lead 1</em></div>
              <div class="lane">
                <div class="v">
                  ${ic(svg`<path d="M-5-4H5M-5 0H5M-5 4H5M0-2H5M0 2H5" stroke="#c2c2c2" stroke-width="1.500"/>`, 14, 17)}
                  ${ic(svg`<path d="M-4.500-4.500v9M-1.500-4.500v9M1.500-4.500v9M4.500-4.500v9M-5-4.500H5M-5-1.500H5M-5 1.500H5M-5 4.500H5" stroke="#9c9c9c" stroke-width="1.100"/>`, 14, 16)}
                  ${ic(svg`<path d="M-3 3L3-3" stroke="#e88432" stroke-width="1.300"/><circle cx="-3.300" cy="3" r="1.700" fill="#e88432"/><circle cx="3.300" cy="-3" r="1.700" fill="#e88432"/>`, 14, 16)}
                </div>
                <div class="g"></div>
                <div class="t">Mix Y<p>XY Instrument</p></div>
              </div>
            </div>
            <div>${this.editor()}
              <div class="scr"><svg width="972" height="18" viewBox="251 668 972 18"><path d="M251 684V677C310 677 330 671 375 672C400 673 410 680 440 680H500C530 680 560 676 590 675L640 673C670 673 665 679 700 679H1223V684z" fill="#3d3d3d"/></svg><span class="mono">[1/4]</span></div>
            </div>
            ${this.tools()}
          </div>
        </div>
      </div>
      <div class="foot">
        ${ic(svg`<circle cx="0" cy="-4" r="1.500" fill="#f07f22"/><path d="M-2-1H.3V4.500M-2 4.500H2.500" stroke="#f07f22" stroke-width="1.700" fill="none"/>`, 34, 15)}
        <div style="width:33px;display:flex;align-items:center;margin-left:-3px"><i></i></div>
        <span style="color:#f07f22;margin-left:-22px;width:49px">ARRANGE</span><span style="width:25px">MIX</span><span style="width:30px">EDIT</span><i></i>
        ${ic(svg`<path d="M-4-3.500h3M-4 3.500h3M-1.500 0h3M2-3h2.500M2 3h2.500" stroke="#ee7d28" stroke-width="2"/>`, 28, 14)}
        ${ic(svg`<rect x="-5" y="-4.500" width="10" height="9" rx="1" fill="none" stroke="#b8b8b8"/><rect x="-5" y="-4" width="4.500" height="8" fill="#c8c8c8"/>`, 14, 14)}
        ${ic(svg`<path d="M-4-5.500v11M0-5.500v11M4-5.500v11" stroke="#c4c4c4" stroke-width="1.200"/><path d="M-6-1.500h4M-2 2.500H2M2 0h4" stroke="#c4c4c4" stroke-width="1.500"/>`, 28, 14)}
        <div style="flex:1"></div>
        ${ic(svg`<circle cx="-.8" cy="-.8" r="3.400" fill="none" stroke="#c8c8c8" stroke-width="1.300"/><path d="M1.800 1.800L5 5" stroke="#c8c8c8" stroke-width="1.600"/>`, 21, 16)}
        ${ic(svg`<path d="M-4-5.500H1L4-2.500V5H-4z" fill="#d4d4d4"/><path d="M1-5.500V-2.500H4" stroke="#555" stroke-width=".8" fill="none"/>`, 21, 16)}
        ${ic(svg`<path d="M-4.500-3L-2-5.500H2L4.500-3V5.500H-4.500z" fill="#d4d4d4"/><circle cy="1" r="2.300" fill="#2d2d2d"/><circle cy="1" r="1" fill="#d4d4d4"/><circle cy="-3.500" r=".8" fill="#2d2d2d"/>`, 21, 16)}
        ${ic(svg`<path d="M-5 0L-2 1V-5Q-1.200-6-.4-5V-1.500L4.500-.2V3L3 5.500H-2z" fill="#d4d4d4"/>`, 21, 16)}
        <div style="width:12px"></div>
        ${ic(G.piano, 21, 16)}
        <div style="width:4px"></div>
      </div>
      <svg class="cursor" width="9" height="14" viewBox="0 0 9 14"><path d="M1 1V11L3.300 9L5 12.500L6.700 11.700L5.200 8.300H8z" fill="#111" stroke="#ddd" stroke-width=".9"/></svg>
    </div>`;
  }
}
